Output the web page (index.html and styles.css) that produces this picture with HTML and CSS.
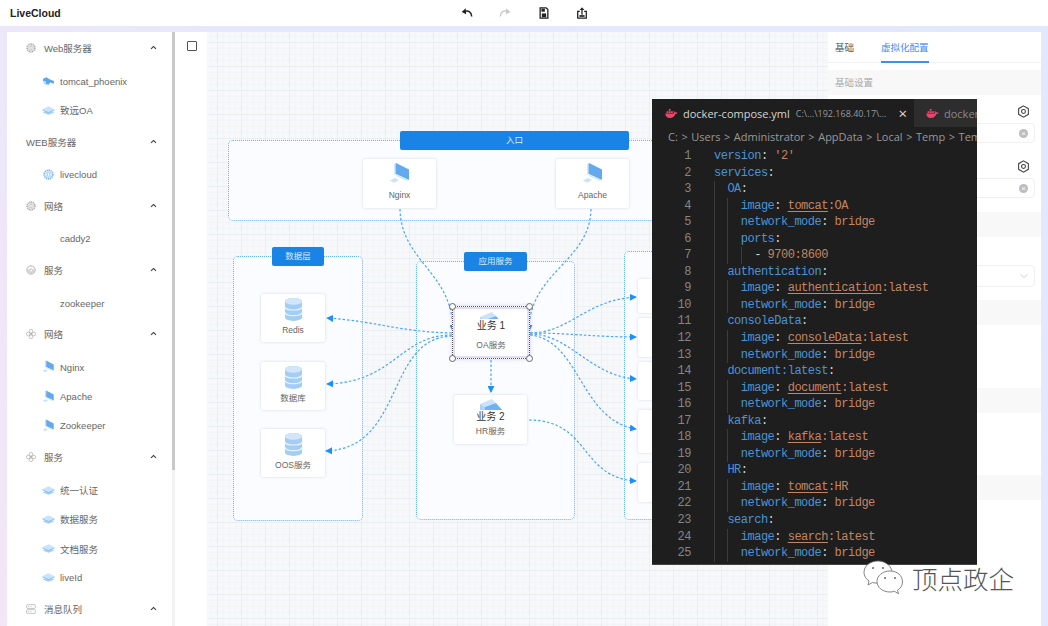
FILE: index.html
```html
<!DOCTYPE html>
<html lang="zh">
<head>
    <meta charset="UTF-8">
    <meta name="viewport" content="width=device-width, initial-scale=1.0">
    <title>LiveCloud</title>
    <link rel="stylesheet" href="styles.css">
</head>
<body>
    <svg class="defs" width="0" height="0">
        <symbol id="i-gear" viewBox="0 0 16 16">
            <circle cx="8" cy="8" r="6.3" fill="none" stroke="currentColor" stroke-width="2.4" stroke-dasharray="2 .9"/>
            <circle cx="8" cy="8" r="4" fill="#fff" stroke="currentColor" stroke-width=".8"/>
            <rect x="6.4" y="5.4" width="3.2" height="5.2" rx="1.4" fill="none" stroke="currentColor"/>
        </symbol>
        <symbol id="i-ring" viewBox="0 0 16 16">
            <circle cx="8" cy="8" r="6.6" fill="none" stroke="currentColor" stroke-width="1.5"/>
            <path d="M3 7.5 8 5l5 2.5v3L8 14l-5-3.5z" fill="currentColor" opacity=".55"/>
            <path d="M5.5 9 8 7.7 10.5 9 8 10.4z" fill="#fff"/>
        </symbol>
        <symbol id="i-flower" viewBox="0 0 16 16">
            <g fill="none" stroke="currentColor" stroke-width="1.1">
                <circle cx="8" cy="3.6" r="2.9"/><circle cx="8" cy="12.4" r="2.9"/>
                <circle cx="3.6" cy="8" r="2.9"/><circle cx="12.4" cy="8" r="2.9"/>
            </g>
            <circle cx="8" cy="8" r="1.5" fill="currentColor"/>
        </symbol>
        <symbol id="i-server" viewBox="0 0 16 16">
            <g fill="none" stroke="currentColor" stroke-width="1.1">
                <rect x="1" y="1" width="14" height="6" rx="1.4"/>
                <rect x="1" y="9" width="14" height="6" rx="1.4"/>
            </g>
            <path d="M3 4h2M7 4h2M3 12h2M7 12h2" stroke="currentColor"/>
        </symbol>
        <symbol id="i-cube" viewBox="0 0 24 18">
            <path d="M12 8 23 12.5 12 17 1 12.5z" fill="#a8d2f7"/>
            <path d="M12 1 23 6.5 12 12 1 6.5z" fill="#c9e3fb"/>
            <path d="M1 6.5 12 12l11-5.500V9L12 14.500 1 9z" fill="#8fc4f4"/>
        </symbol>
        <symbol id="i-block" viewBox="0 0 24 18">
            <path d="M1 6 13 1l4 4L6 9z" fill="#c9e3fb"/>
            <path d="M1 6l5 3v9H1z" fill="#a8d2f7"/>
            <path d="M6 9l11-4 7 8v5H6z" fill="#6fb2ef"/>
        </symbol>
        <symbol id="i-pc" viewBox="0 0 22 24">
            <path d="M7 1 20 7.500V18L7 12z" fill="#62a9ee"/>
            <path d="M5.500 1.800 7 1v11l-1.500.8z" fill="#a8d2f7"/>
            <path d="M7 12.500 20 18l-2 1-5-2-6-3z" fill="#d5e9fb"/>
            <path d="M1 18.500 6 16l4 2-5 2.800z" fill="#c9e3fb"/>
        </symbol>
        <symbol id="i-cat" viewBox="0 0 24 18">
            <path d="M2 4 8 1l6 4 8 3v5l-7-2-3 4-5-2V8L2 9z" fill="#5aa7ec"/>
            <path d="M2 9l5-1v5l5 2v2L4 14z" fill="#b6daf8"/>
        </symbol>
        <symbol id="i-db" viewBox="0 0 20 26">
            <path d="M1 4.500C1 2.500 5 1 10 1s9 1.500 9 3.500v17c0 2-4 3.500-9 3.500s-9-1.500-9-3.500z" fill="#a3cdf5"/>
            <ellipse cx="10" cy="4.500" rx="9" ry="3.500" fill="#d2e6fa"/>
            <path d="M1 10c0 2 4 3.500 9 3.500s9-1.500 9-3.500M1 16c0 2 4 3.500 9 3.500s9-1.500 9-3.500" fill="none" stroke="#e8f3fd" stroke-width="1.200"/>
        </symbol>
        <symbol id="i-up" viewBox="0 0 10 6">
            <path d="M1.500 4.800 5 1.500l3.500 3.300" fill="none" stroke="currentColor" stroke-width="1.500"/>
        </symbol>
        <symbol id="i-whale" viewBox="0 0 14 10">
            <path d="M0 5h9.500c.3-1.200.1-2.300-.5-3 1 .2 1.700.9 1.900 1.800.9-.3 2-.2 3 .4-.6 1-1.500 1.400-2.700 1.400C10.700 8.200 8.500 10 5 10 2 10 .3 8 0 5z" fill="#e8476b"/>
            <path d="M1.500 2.500h2v2h-2zM4 2.500h2v2H4zM6.500 2.500h2v2h-2zM4 0h2v2H4z" fill="#e8476b"/>
        </symbol>
        <marker id="arrow" viewBox="0 0 8 8" refX="7" refY="4" markerWidth="7" markerHeight="7" markerUnits="userSpaceOnUse" orient="auto">
            <path d="M0 0 8 4 0 8z" fill="#1c8fff"/>
        </marker>
    </svg>

    <header class="topbar">
        <div class="logo">LiveCloud</div>
        <div class="actions">
            <svg class="action" viewBox="0 0 14 14"><path d="M12.500 11C12.500 6 8 3 3.500 5.500" fill="none" stroke="#222" stroke-width="1.800"/><path d="M5.500 1.500 6 8.500 0.800 5.800z" fill="#222"/></svg>
            <svg class="action" viewBox="0 0 14 14"><path d="M1.500 11C1.500 6 6 3 10.500 5.500" fill="none" stroke="#c8c8c8" stroke-width="1.500"/><path d="M8.500 1.500 8 8.500l5.200-2.700z" fill="#c8c8c8"/></svg>
            <svg class="action" viewBox="0 0 14 14"><path d="M2.500 1h7l2 2v10h-9z" fill="none" stroke="#222" stroke-width="1.500"/><rect x="4.500" y="7.500" width="5" height="4.500" fill="#222"/><rect x="4" y="2" width="4" height="3.500" fill="#222"/></svg>
            <svg class="action" viewBox="0 0 14 14"><path d="M4.500 5H2v8h10V5H9.500" fill="none" stroke="#222" stroke-width="1.500"/><path d="M7 2v7" stroke="#222" stroke-width="1.500"/><path d="M4.300 3.500 7 .4l2.700 3.100z" fill="#222"/><rect x="4" y="9.500" width="6" height="2" fill="#222"/></svg>
        </div>
    </header>

    <main class="workspace">
        <nav class="sidebar">
            <section class="group">
                <div class="group-head"><svg class="head-icon"><use href="#i-gear"/></svg><span>Web服务器</span><svg class="chev"><use href="#i-up"/></svg></div>
                <ul class="children">
                    <li><svg class="item-icon"><use href="#i-cat"/></svg>tomcat_phoenix</li>
                    <li><svg class="item-icon"><use href="#i-cube"/></svg>致远OA</li>
                </ul>
            </section>
            <section class="group">
                <div class="group-head"><span>WEB服务器</span><svg class="chev"><use href="#i-up"/></svg></div>
                <ul class="children">
                    <li><svg class="item-icon blue"><use href="#i-gear"/></svg>livecloud</li>
                </ul>
            </section>
            <section class="group">
                <div class="group-head"><svg class="head-icon"><use href="#i-gear"/></svg><span>网络</span><svg class="chev"><use href="#i-up"/></svg></div>
                <ul class="children">
                    <li class="no-icon">caddy2</li>
                </ul>
            </section>
            <section class="group">
                <div class="group-head"><svg class="head-icon"><use href="#i-ring"/></svg><span>服务</span><svg class="chev"><use href="#i-up"/></svg></div>
                <ul class="children">
                    <li class="no-icon">zookeeper</li>
                </ul>
            </section>
            <section class="group">
                <div class="group-head"><svg class="head-icon"><use href="#i-flower"/></svg><span>网络</span><svg class="chev"><use href="#i-up"/></svg></div>
                <ul class="children">
                    <li><svg class="item-icon tall"><use href="#i-pc"/></svg>Nginx</li>
                    <li><svg class="item-icon tall"><use href="#i-pc"/></svg>Apache</li>
                    <li><svg class="item-icon tall"><use href="#i-pc"/></svg>Zookeeper</li>
                </ul>
            </section>
            <section class="group">
                <div class="group-head"><svg class="head-icon"><use href="#i-flower"/></svg><span>服务</span><svg class="chev"><use href="#i-up"/></svg></div>
                <ul class="children">
                    <li><svg class="item-icon"><use href="#i-cube"/></svg>统一认证</li>
                    <li><svg class="item-icon"><use href="#i-cube"/></svg>数据服务</li>
                    <li><svg class="item-icon"><use href="#i-cube"/></svg>文档服务</li>
                    <li><svg class="item-icon"><use href="#i-cube"/></svg>liveId</li>
                </ul>
            </section>
            <section class="group">
                <div class="group-head"><svg class="head-icon"><use href="#i-server"/></svg><span>消息队列</span><svg class="chev"><use href="#i-up"/></svg></div>
            </section>
        </nav>
        <div class="scrollbar"><div class="scroll-thumb"></div></div>
        <div class="toolstrip"><span class="tool-check"></span></div>

        <div class="canvas">
            <div class="zone zone-entry"></div>
            <div class="zone-title title-entry">入口</div>
            <div class="zone zone-data"></div>
            <div class="zone-title title-data">数据层</div>
            <div class="zone zone-app"></div>
            <div class="zone-title title-app">应用服务</div>
            <div class="zone zone-ext"></div>

            <svg class="links" viewBox="207 32 621 594">
                <g fill="none" stroke="#48a4fb" stroke-width="1.200" stroke-dasharray="2.500 2" marker-end="url(#arrow)">
                    <path d="M400 209C401 262 453 272 453 331"/>
                    <path d="M591 209C590 262 529 272 529 331"/>
                    <path d="M452 333C400 332 375 321 327 318"/>
                    <path d="M452 335C400 335 395 382 327 384"/>
                    <path d="M452 336C385 338 405 448 326 451"/>
                    <path d="M530 333C570 333 585 300 636 297"/>
                    <path d="M530 333C570 333 595 337 636 337"/>
                    <path d="M530 334C570 334 590 376 636 379"/>
                    <path d="M530 335C580 340 580 420 636 429"/>
                    <path d="M529 420C590 420 580 478 636 481"/>
                    <path d="M491 360V392"/>
                </g>
            </svg>

            <div class="node node-nginx"><svg class="node-pc"><use href="#i-pc"/></svg><span>Nginx</span></div>
            <div class="node node-apache"><svg class="node-pc"><use href="#i-pc"/></svg><span>Apache</span></div>
            <div class="node node-redis"><svg class="node-db"><use href="#i-db"/></svg><span>Redis</span></div>
            <div class="node node-sql"><svg class="node-db"><use href="#i-db"/></svg><span>数据库</span></div>
            <div class="node node-oos"><svg class="node-db"><use href="#i-db"/></svg><span>OOS服务</span></div>
            <div class="node node-oa">
                <svg class="node-cube"><use href="#i-block" width="24" height="18"/></svg>
                <b>业务 1</b><span>OA服务</span>
                <i class="handle tl"></i><i class="handle tr"></i><i class="handle bl"></i><i class="handle br"></i>
            </div>
            <div class="node node-hr">
                <svg class="node-cube"><use href="#i-block" width="24" height="18"/></svg>
                <b>业务 2</b><span>HR服务</span>
            </div>
            <div class="node ext-1"></div>
            <div class="node ext-2"></div>
            <div class="node ext-3"></div>
            <div class="node ext-4"></div>
            <div class="node ext-5"></div>
        </div>

        <aside class="panel">
            <div class="tabs">
                <span class="tab">基础</span>
                <span class="tab active">虚拟化配置</span>
            </div>
            <div class="band">基础设置</div>
            <div class="fields">
                <div class="field-top"><svg class="cog" viewBox="0 0 12 12"><path d="M6 .8 10.500 3.400V8.600L6 11.200 1.500 8.600V3.400z" fill="none" stroke="#444"/><circle cx="6" cy="6" r="1.800" fill="none" stroke="#444"/></svg></div>
                <div class="input"><span class="clear">×</span></div>
                <div class="field-top"><svg class="cog" viewBox="0 0 12 12"><path d="M6 .8 10.500 3.400V8.600L6 11.200 1.500 8.600V3.400z" fill="none" stroke="#444"/><circle cx="6" cy="6" r="1.800" fill="none" stroke="#444"/></svg></div>
                <div class="input"><span class="clear">×</span></div>
            </div>
            <div class="band"></div>
            <div class="select-wrap">
                <div class="input tall"><svg class="sel-chev" viewBox="0 0 10 6"><path d="M1 1l4 4 4-4" fill="none" stroke="#bbb"/></svg></div>
            </div>
            <div class="band"></div>
            <div class="blank"></div>
            <div class="band"></div>
            <div class="blank"></div>
            <div class="band"></div>
        </aside>
    </main>

    <div class="editor">
        <div class="editor-tabs">
            <div class="etab current">
                <svg class="whale"><use href="#i-whale"/></svg>
                <span class="fname">docker-compose.yml</span>
                <span class="fpath">C:\...\192.168.40.17\...</span>
                <span class="close">×</span>
            </div>
            <div class="etab other">
                <svg class="whale"><use href="#i-whale"/></svg>
                <span class="fname">docker-compose.yml</span>
            </div>
        </div>
        <div class="crumbs">C: &gt; Users &gt; Administrator &gt; AppData &gt; Local &gt; Temp &gt; Temp</div>
        <div class="code">
            <div class="ln"><span class="no">1</span><span class="k">version</span>: <span class="v">'2'</span></div>
            <div class="ln"><span class="no">2</span><span class="k">services</span>:</div>
            <div class="ln"><span class="no">3</span><i></i><span class="k">OA</span>:</div>
            <div class="ln"><span class="no">4</span><i></i><i></i><span class="k">image</span>: <span class="v"><u>tomcat</u>:OA</span></div>
            <div class="ln"><span class="no">5</span><i></i><i></i><span class="k">network_mode</span>: <span class="v">bridge</span></div>
            <div class="ln"><span class="no">6</span><i></i><i></i><span class="k">ports</span>:</div>
            <div class="ln"><span class="no">7</span><i></i><i></i><i></i>- <span class="v">9700:8600</span></div>
            <div class="ln"><span class="no">8</span><i></i><span class="k">authentication</span>:</div>
            <div class="ln"><span class="no">9</span><i></i><i></i><span class="k">image</span>: <span class="v"><u>authentication</u>:latest</span></div>
            <div class="ln"><span class="no">10</span><i></i><i></i><span class="k">network_mode</span>: <span class="v">bridge</span></div>
            <div class="ln"><span class="no">11</span><i></i><span class="k">consoleData</span>:</div>
            <div class="ln"><span class="no">12</span><i></i><i></i><span class="k">image</span>: <span class="v"><u>consoleData</u>:latest</span></div>
            <div class="ln"><span class="no">13</span><i></i><i></i><span class="k">network_mode</span>: <span class="v">bridge</span></div>
            <div class="ln"><span class="no">14</span><i></i><span class="k">document:latest</span>:</div>
            <div class="ln"><span class="no">15</span><i></i><i></i><span class="k">image</span>: <span class="v"><u>document</u>:latest</span></div>
            <div class="ln"><span class="no">16</span><i></i><i></i><span class="k">network_mode</span>: <span class="v">bridge</span></div>
            <div class="ln"><span class="no">17</span><i></i><span class="k">kafka</span>:</div>
            <div class="ln"><span class="no">18</span><i></i><i></i><span class="k">image</span>: <span class="v"><u>kafka</u>:latest</span></div>
            <div class="ln"><span class="no">19</span><i></i><i></i><span class="k">network_mode</span>: <span class="v">bridge</span></div>
            <div class="ln"><span class="no">20</span><i></i><span class="k">HR</span>:</div>
            <div class="ln"><span class="no">21</span><i></i><i></i><span class="k">image</span>: <span class="v"><u>tomcat</u>:HR</span></div>
            <div class="ln"><span class="no">22</span><i></i><i></i><span class="k">network_mode</span>: <span class="v">bridge</span></div>
            <div class="ln"><span class="no">23</span><i></i><span class="k">search</span>:</div>
            <div class="ln"><span class="no">24</span><i></i><i></i><span class="k">image</span>: <span class="v"><u>search</u>:latest</span></div>
            <div class="ln"><span class="no">25</span><i></i><i></i><span class="k">network_mode</span>: <span class="v">bridge</span></div>
        </div>
    </div>

    <div class="watermark">
        <svg class="wechat" viewBox="0 0 42 36">
            <g fill="#fff" stroke="#666" stroke-width=".8">
                <path d="M15 1C7 1 1 6 1 12.500c0 3.500 2 6.500 5 8.500l-1 4 4.500-2.500c2 .5 3.500.7 5.500.7 8 0 14-5 14-10.700S23 1 15 1z"/>
                <path d="M27 11c-7.500 0-13 4.700-13 10.500S19.500 32 27 32c1.500 0 3-.2 4.500-.7l4 2.500-1-3.500c3-2 5-5 5-8.300C39.500 15.700 34.500 11 27 11z"/>
            </g>
            <g fill="#666"><circle cx="10" cy="8" r="1"/><circle cx="20" cy="8" r="1"/><circle cx="22" cy="18" r="1"/><circle cx="32" cy="18" r="1"/></g>
        </svg>
        <span class="wm-text">顶点政企</span>
    </div>
</body>
</html>
```

FILE: styles.css
```css
* {
    box-sizing: border-box;
}
html, body {
    margin: 0;
    height: 100%;
}
body {
    position: relative;
    width: 1048px;
    height: 626px;
    overflow: hidden;
    display: flex;
    flex-direction: column;
    font-family: "Liberation Sans", "Noto Sans CJK SC", sans-serif;
    font-size: 9.500px;
    color: #666;
    background: linear-gradient(60deg, #f3e6f6 0%, #e6e8fc 45%, #e2e9fd 100%);
}
.defs {
    position: absolute;
}

/* top bar */
.topbar {
    height: 26px;
    flex: none;
    background: #fff;
    position: relative;
    display: flex;
    align-items: center;
    padding-left: 10px;
}
.logo {
    font-size: 10.500px;
    font-weight: bold;
    color: #222;
}
.actions {
    display: flex;
    gap: 26.500px;
    margin-left: 400px;
}
.action {
    width: 12px;
    height: 12px;
}

/* main row */
.workspace {
    flex: 1;
    display: flex;
    margin: 6px 7px 0 7px;
    min-height: 0;
}
.sidebar {
    width: 165px;
    flex: none;
    background: #fff;
    overflow: hidden;
}
.group {
    margin-bottom: .5px;
}
.group-head {
    height: 32px;
    display: flex;
    align-items: center;
    padding-left: 19px;
    position: relative;
    color: #666;
}
.head-icon {
    width: 10px;
    height: 10px;
    margin-right: 8px;
    color: #aaa;
}
.chev {
    position: absolute;
    left: 143px;
    top: 13px;
    width: 7px;
    height: 5px;
    color: #333;
}
.children {
    list-style: none;
    margin: 0;
    padding: 2.500px 0 0;
}
.children li {
    height: 29.250px;
    display: flex;
    align-items: center;
    padding-left: 35px;
}
.children li.no-icon {
    padding-left: 53px;
}
.item-icon {
    width: 13px;
    height: 11px;
    margin-right: 5px;
}
.item-icon.tall {
    height: 14px;
}
.item-icon.blue {
    color: #7fb5f2;
}
.scrollbar {
    width: 3px;
    flex: none;
    background: #f2f2f4;
}
.scroll-thumb {
    height: 438px;
    background: #c9c9cc;
}
.toolstrip {
    width: 32px;
    flex: none;
    background: #fff;
    padding: 9px 0 0 12px;
}
.tool-check {
    display: block;
    width: 10px;
    height: 10px;
    border: 1px solid #555;
    border-radius: 1px;
}

/* canvas */
.canvas {
    position: relative;
    width: 621px;
    flex: none;
    overflow: hidden;
    background-color: #f6f8fa;
    background-image:
        linear-gradient(#ebeef2 1px, transparent 1px),
        linear-gradient(90deg, #ebeef2 1px, transparent 1px),
        linear-gradient(#f2f4f7 1px, transparent 1px),
        linear-gradient(90deg, #f2f4f7 1px, transparent 1px);
    background-size: 24px 24px, 24px 24px, 6px 6px, 6px 6px;
    background-position: 10px 10px;
}
.links {
    position: absolute;
    left: 0;
    top: 0;
    width: 621px;
    height: 594px;
}
.zone {
    position: absolute;
    background: #fafcff;
    border: 1px dotted #63b0f8;
    border-radius: 5px;
}
.zone-entry { left: 21px; top: 108px; width: 600px; height: 81px; }
.zone-data { left: 26px; top: 224px; width: 130px; height: 265px; }
.zone-app { left: 209px; top: 229px; width: 159px; height: 259px; }
.zone-ext { left: 417px; top: 219px; width: 190px; height: 269px; }
.zone-title {
    position: absolute;
    height: 19px;
    line-height: 19px;
    text-align: center;
    font-size: 8.500px;
    color: #dcebfc;
    background: #1a83e6;
    border-radius: 2px;
}
.title-entry { left: 193px; top: 99px; width: 229px; }
.title-data { left: 65px; top: 215px; width: 52px; }
.title-app { left: 257px; top: 220px; width: 63px; }

.node {
    position: absolute;
    display: flex;
    flex-direction: column;
    align-items: center;
    background: #fff;
    border-radius: 2px;
    box-shadow: 0 0 3px rgba(60, 80, 120, .2);
    font-size: 8.500px;
    color: #666;
}
.node span {
    line-height: 11px;
}
.node-pc {
    width: 24px;
    height: 24px;
    margin-top: 3px;
    margin-bottom: 3.500px;
}
.node-db {
    width: 19px;
    height: 25px;
    margin-top: 3px;
    margin-bottom: 2.500px;
}
.node-cube {
    width: 24px;
    height: 12px;
    margin-top: 3px;
    flex: none;
}
.node b {
    font-weight: normal;
    font-size: 10px;
    line-height: 14px;
    color: #333;
    margin-bottom: 1.500px;
}
.node-nginx { left: 156px; top: 127px; width: 73px; height: 49px; }
.node-apache { left: 349px; top: 127px; width: 73px; height: 49px; }
.node-redis { left: 54px; top: 262px; width: 64px; height: 48px; }
.node-sql { left: 54px; top: 330px; width: 64px; height: 48px; }
.node-oos { left: 54px; top: 397px; width: 64px; height: 48px; }
.node-oa {
    left: 245px;
    top: 274px;
    width: 78px;
    height: 53px;
    border: 1px dotted #555;
    border-radius: 0;
    box-shadow: inset 0 0 0 2px #e2ddfb, 0 0 4px rgba(120, 100, 240, .3);
}
.node-oa .node-cube {
    height: 8px;
    margin-top: 4px;
}
.node-oa b {
    margin-bottom: 6.500px;
}
.node-hr { left: 247px; top: 363px; width: 73px; height: 49px; }
.ext-1 { left: 431px; top: 247px; width: 60px; height: 34px; }
.ext-2 { left: 431px; top: 286px; width: 60px; height: 39px; }
.ext-3 { left: 431px; top: 330px; width: 60px; height: 38px; }
.ext-4 { left: 431px; top: 378px; width: 60px; height: 43px; }
.ext-5 { left: 431px; top: 431px; width: 60px; height: 39px; }
.handle {
    position: absolute;
    width: 7px;
    height: 7px;
    background: #fff;
    border: 1px solid #666;
    border-radius: 50%;
}
.tl { left: -4px; top: -4px; }
.tr { right: -4px; top: -4px; }
.bl { left: -4px; bottom: -4px; }
.br { right: -4px; bottom: -4px; }

/* right panel */
.panel {
    width: 213px;
    flex: none;
    background: #fff;
}
.tabs {
    height: 31px;
    margin-bottom: 7px;
    display: flex;
    gap: 27px;
    padding-left: 7px;
    border-bottom: 1px solid #f2f2f2;
}
.tab {
    line-height: 32px;
    color: #555;
}
.tab.active {
    color: #3d8ef5;
    border-bottom: 2px solid #3d8ef5;
    height: 31px;
}
.band {
    height: 25px;
    line-height: 25px;
    padding-left: 7px;
    color: #aaa;
    background: #f8f8f8;
}
.fields {
    height: 117px;
    padding: 9px 6px 0 0;
}
.field-top {
    height: 14px;
    margin-bottom: 5px;
    display: flex;
    justify-content: flex-end;
    padding-right: 5px;
}
.cog {
    width: 13px;
    height: 13px;
    margin-top: 1px;
}
.input {
    height: 20px;
    margin-bottom: 16px;
    margin-left: 6px;
    border: 1px solid #f0f0f0;
    border-radius: 4px;
    position: relative;
}
.clear {
    position: absolute;
    right: 6px;
    top: 5px;
    width: 9px;
    height: 9px;
    line-height: 9px;
    text-align: center;
    font-size: 8px;
    color: #fff;
    background: #bdbdbd;
    border-radius: 50%;
}
.select-wrap {
    height: 63px;
    padding: 28px 6px 0 0;
}
.input.tall {
    height: 22px;
    margin-bottom: 0;
}
.sel-chev {
    position: absolute;
    right: 6px;
    top: 7px;
    width: 8px;
    height: 6px;
}
.blank {
    height: 62.500px;
}

/* floating editor */
.editor {
    position: absolute;
    left: 652px;
    top: 99px;
    width: 325px;
    height: 466px;
    overflow: hidden;
    background: #1e1e1e;
    border-bottom: 1px solid #444;
    color: #d4d4d4;
    font-family: "Open Sans", "Liberation Sans", sans-serif;
}
.editor-tabs {
    height: 28px;
    display: flex;
    background: #2d2d2d;
}
.etab {
    display: flex;
    align-items: center;
    flex: none;
    white-space: nowrap;
}
.etab.current {
    width: 262px;
    padding-left: 13px;
    background: #1e1e1e;
}
.etab.other {
    padding-left: 12px;
    color: #888;
}
.whale {
    width: 13px;
    height: 9px;
    margin-right: 5px;
}
.fname {
    font-size: 11px;
}
.fpath {
    font-size: 9px;
    color: #999;
    margin-left: 6px;
}
.close {
    font-size: 15px;
    color: #ddd;
    margin-left: auto;
    margin-right: 7px;
    line-height: 1;
}
.crumbs {
    height: 21px;
    line-height: 20px;
    padding-left: 16px;
    white-space: nowrap;
    font-size: 11px;
    word-spacing: .7px;
    color: #999;
}
.code {
    font-family: "Liberation Mono", monospace;
    font-size: 12px;
    letter-spacing: -.5px;
}
.ln {
    height: 16.550px;
    line-height: 16.550px;
    white-space: pre;
    display: flex;
}
.no {
    width: 62px;
    padding-right: 23px;
    text-align: right;
    color: #858585;
    flex: none;
}
.ln i {
    width: 13.400px;
    flex: none;
    border-left: 1px solid #3c3c3c;
}
.k {
    color: #4a94d4;
}
.v {
    color: #c48462;
    white-space: pre;
}
.v u {
    text-decoration-color: #c48462;
    text-underline-offset: 2px;
}

/* watermark */
.watermark {
    position: absolute;
    left: 863px;
    top: 560px;
    display: flex;
    align-items: center;
    gap: 7px;
}
.wechat {
    width: 42px;
    height: 36px;
}
.wm-text {
    font-family: "Noto Sans CJK SC", sans-serif;
    font-size: 25.500px;
    font-weight: 300;
    line-height: 36px;
    color: #555;
    text-shadow: 1px 1px 0 #fff;
}
```
